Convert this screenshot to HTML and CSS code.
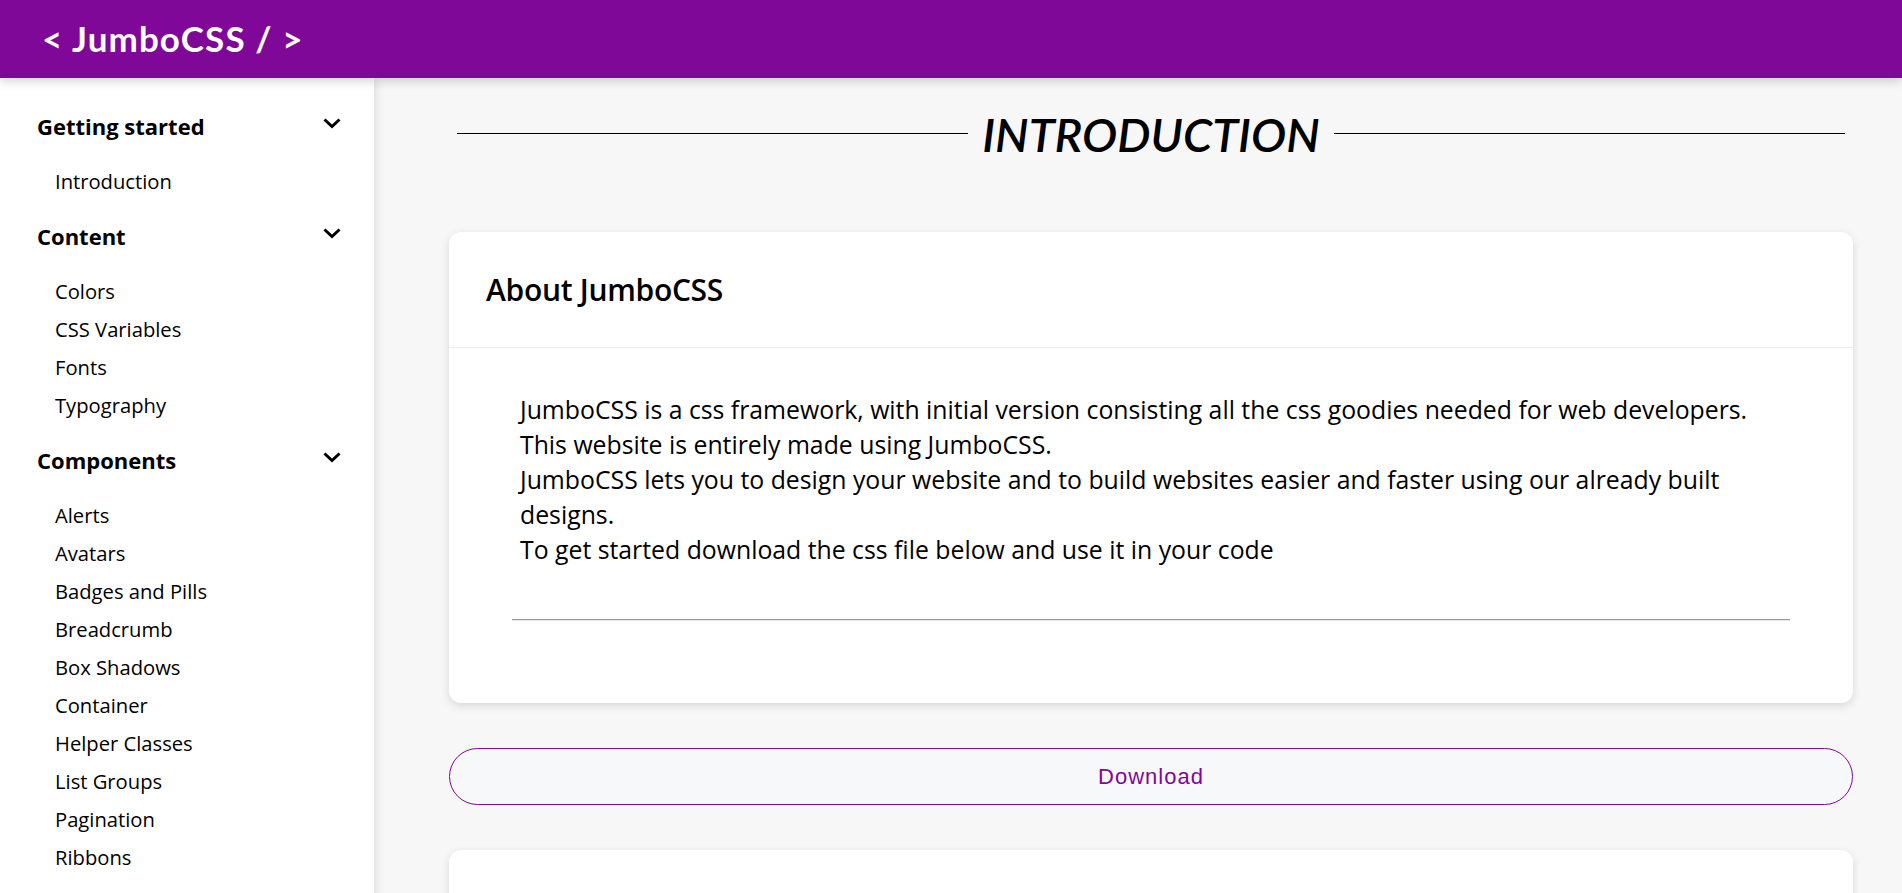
FILE: index.html
```html
<!DOCTYPE html>
<html lang="en">
<head>
<meta charset="utf-8">
<title>JumboCSS</title>
<link rel="stylesheet" href="styles.css">
</head>
<body>
<header class="topbar">
  <div class="brand">&lt; JumboCSS / &gt;</div>
</header>
<div class="layout">
  <aside class="sidebar">
    <section class="nav-section">
      <div class="nav-head"><span>Getting started</span><svg class="chev" viewBox="0 0 18 11" width="18" height="11"><path d="M1.5 1.5 L9 8.5 L16.5 1.5" fill="none" stroke="#000" stroke-width="3"/></svg></div>
      <ul class="nav-list">
        <li>Introduction</li>
      </ul>
    </section>
    <section class="nav-section">
      <div class="nav-head"><span>Content</span><svg class="chev" viewBox="0 0 18 11" width="18" height="11"><path d="M1.5 1.5 L9 8.5 L16.5 1.5" fill="none" stroke="#000" stroke-width="3"/></svg></div>
      <ul class="nav-list">
        <li>Colors</li>
        <li>CSS Variables</li>
        <li>Fonts</li>
        <li>Typography</li>
      </ul>
    </section>
    <section class="nav-section">
      <div class="nav-head"><span>Components</span><svg class="chev" viewBox="0 0 18 11" width="18" height="11"><path d="M1.5 1.5 L9 8.5 L16.5 1.5" fill="none" stroke="#000" stroke-width="3"/></svg></div>
      <ul class="nav-list">
        <li>Alerts</li>
        <li>Avatars</li>
        <li>Badges and Pills</li>
        <li>Breadcrumb</li>
        <li>Box Shadows</li>
        <li>Container</li>
        <li>Helper Classes</li>
        <li>List Groups</li>
        <li>Pagination</li>
        <li>Ribbons</li>
      </ul>
    </section>
  </aside>
  <main class="main">
    <h1 class="page-title"><span>INTRODUCTION</span></h1>
    <article class="card">
      <div class="card-header">About JumboCSS</div>
      <div class="card-body">
        <p class="intro">JumboCSS is a css framework, with initial version consisting all the css goodies needed for web developers.<br>This website is entirely made using JumboCSS.<br>JumboCSS lets you to design your website and to build websites easier and faster using our already built designs.<br>To get started download the css file below and use it in your code</p>
        <hr class="divider">
      </div>
    </article>
    <button class="download">Download</button>
    <article class="card">
      <div class="card-header">How to use</div>
      <div class="card-body">
        <p class="intro">Link the downloaded stylesheet in the head of your HTML document and start using the classes.</p>
        <hr class="divider">
      </div>
    </article>
    <article class="card">
      <div class="card-header">Browser support</div>
      <div class="card-body">
        <p class="intro">JumboCSS works on all modern browsers.</p>
        <hr class="divider">
      </div>
    </article>
  </main>
</div>
</body>
</html>
```
FILE: styles.css
```css
html::-webkit-scrollbar { width: 4px; }
html::-webkit-scrollbar-track { background: #f1f1f1; }
html::-webkit-scrollbar-thumb { background: #c1c1c1; }

* { box-sizing: border-box; }

body {
  margin: 0;
  background: #f7f7f7;
  font-family: "Open Sans", "Noto Sans", sans-serif;
  color: #000;
}

.topbar {
  height: 78px;
  background: #800898;
  display: flex;
  align-items: center;
  padding-left: 42px;
  box-shadow: 0 3px 10px rgba(0,0,0,0.18);
  position: relative;
  z-index: 2;
}

.brand {
  color: #fff;
  font-family: Lato, "Open Sans", sans-serif;
  font-size: 35px;
  font-weight: 700;
  letter-spacing: 1.1px;
  padding-bottom: 2px;
}

.layout {
  display: flex;
  align-items: stretch;
}

.sidebar {
  width: 374px;
  flex: 0 0 374px;
  background: #fff;
  padding: 28px 34px 40px 37px;
  box-shadow: 2px 0 9px rgba(0,0,0,0.11);
  position: relative;
  z-index: 1;
}

.nav-head {
  height: 40px;
  display: flex;
  align-items: center;
  justify-content: space-between;
  font-size: 22px;
  font-weight: 700;
}

.chev { margin-top: -5px; margin-right: -1px; }

.nav-list {
  list-style: none;
  margin: 16px 0 16px;
  padding: 0 0 0 18px;
}

.nav-list li {
  height: 38px;
  line-height: 38px;
  font-size: 20.2px;
}

.main {
  flex: 1;
  padding: 26px 49px 60px 75px;
}

.page-title {
  display: flex;
  align-items: center;
  gap: 14px;
  margin: 0 8px;
  height: 60px;
  font-family: Lato, "Open Sans", sans-serif;
  font-size: 47px;
  font-weight: 600;
  font-style: italic;
  letter-spacing: 0;
}

.page-title::before,
.page-title::after {
  content: "";
  flex: 1;
  height: 1px;
  background: #000;
  margin-top: -2px;
}

.card {
  margin-top: 68px;
  background: #fff;
  border-radius: 12px;
  box-shadow: 0 3px 10px rgba(0,0,0,0.13);
}

.card + .download { margin-top: 45px; }
.download + .card { margin-top: 45px; }

.card-header {
  height: 116px;
  display: flex;
  align-items: center;
  padding-left: 37px;
  border-bottom: 1px solid #ececec;
  font-size: 30px;
  font-weight: 600;
  letter-spacing: -0.3px;
}

.card-body {
  padding: 44px 63px 82px;
}

.intro {
  margin: 0;
  padding-left: 8px;
  font-size: 24.8px;
  line-height: 35px;
}

.divider {
  margin: 52px 0 0;
  border: 0;
  border-top: 1px solid #9a9a9a;
  border-bottom: 1px solid #e8e8e8;
}

.download {
  display: block;
  width: 100%;
  height: 57px;
  background: #f7f8fa;
  border: 1px solid #800898;
  border-radius: 29px;
  color: #800898;
  font-family: "Liberation Sans", Arial, sans-serif;
  font-size: 22px;
  letter-spacing: 1px;
  cursor: pointer;
}
```
